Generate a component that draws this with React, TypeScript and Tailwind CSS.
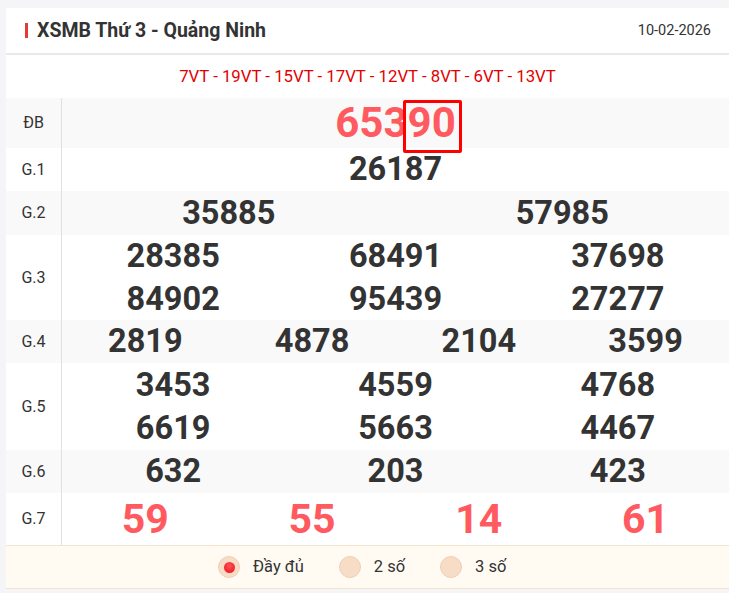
import React from "react";

const font = { fontFamily: "Roboto, 'Noto Sans', sans-serif" };

type Row = {
  label: string;
  cols: number;
  nums: string[];
  kind?: "db" | "g7";
  lineH: number;
  bg: boolean;
};

const rows: Row[] = [
  { label: "ĐB", cols: 1, nums: ["65390"], kind: "db", lineH: 50, bg: true },
  { label: "G.1", cols: 1, nums: ["26187"], lineH: 43, bg: false },
  { label: "G.2", cols: 2, nums: ["35885", "57985"], lineH: 44, bg: true },
  { label: "G.3", cols: 3, nums: ["28385", "68491", "37698", "84902", "95439", "27277"], lineH: 42.5, bg: false },
  { label: "G.4", cols: 4, nums: ["2819", "4878", "2104", "3599"], lineH: 43, bg: true },
  { label: "G.5", cols: 3, nums: ["3453", "4559", "4768", "6619", "5663", "4467"], lineH: 43.5, bg: false },
  { label: "G.6", cols: 3, nums: ["632", "203", "423"], lineH: 43, bg: true },
  { label: "G.7", cols: 4, nums: ["59", "55", "14", "61"], kind: "g7", lineH: 52, bg: false },
];

const gridCls: Record<number, string> = {
  1: "grid grid-cols-1",
  2: "grid grid-cols-2",
  3: "grid grid-cols-3",
  4: "grid grid-cols-4",
};

function Num({ n, kind, h }: { n: string; kind?: string; h: number }) {
  if (kind === "db") {
    return (
      <div className="flex items-center justify-center" style={{ height: h }}>
        <span className="relative text-[42px] font-bold text-[#ff5a5f] leading-none">
          653
          <span className="relative">
            90
            <span className="absolute left-[-5px] right-[-6px] top-[2px] bottom-[-6px] border-[3px] border-[#ff0000] rounded-[2px]" />
          </span>
        </span>
      </div>
    );
  }
  if (kind === "g7") {
    return (
      <div className="flex items-center justify-center text-[41px] font-bold text-[#ff5a5f] leading-none" style={{ height: h }}>
        {n}
      </div>
    );
  }
  return (
    <div className="flex items-center justify-center text-[32.5px] font-bold text-[#333] leading-none" style={{ height: h }}>
      {n}
    </div>
  );
}

function Radio({ checked, label }: { checked?: boolean; label: string }) {
  return (
    <div className="flex items-center gap-[13px]">
      <span className="w-[22px] h-[22px] rounded-full bg-[#f7dcc6] border border-[#efd0b8] flex items-center justify-center">
        {checked && (
          <span className="w-[11px] h-[11px] rounded-full bg-[radial-gradient(circle_at_50%_35%,#ff5252,#e8101e)]" />
        )}
      </span>
      <span className="text-[16.5px] text-[#333]">{label}</span>
    </div>
  );
}

export default function App() {
  return (
    <div className="min-h-[593px] bg-[#f5f5f7] pt-[8px] pl-[6px]" style={font}>
      <div className="bg-white">
        <div className="h-[47px] flex items-center justify-between pl-[19px] pr-[18px] border-b-2 border-[#ece8e9]">
          <div className="flex items-center gap-[9px]">
            <span className="w-[3px] h-[15px] bg-[#e53935]" />
            <span className="text-[19.5px] font-bold text-[#333]">XSMB Thứ 3 - Quảng Ninh</span>
          </div>
          <span className="text-[14.5px] text-[#333]">10-02-2026</span>
        </div>
        <div className="h-[43px] flex items-center justify-center text-[16.8px] text-[#e30000]">
          7VT - 19VT - 15VT - 17VT - 12VT - 8VT - 6VT - 13VT
        </div>
        <div>
          {rows.map((r) => (
            <div key={r.label} className={`flex ${r.bg ? "bg-[#f9f9f9]" : "bg-white"}`}>
              <div className="w-[56px] shrink-0 flex items-center justify-center text-[16px] text-[#333] border-r border-[#e0e0e0]">
                {r.label}
              </div>
              <div className={`flex-1 ${gridCls[r.cols]}`}>
                {r.nums.map((n, i) => (
                  <Num key={i} n={n} kind={r.kind} h={r.lineH} />
                ))}
              </div>
            </div>
          ))}
        </div>
        <div className="h-[44px] bg-[#fffbf3] border-y border-[#f3e4cf] flex items-center gap-[35px] pl-[212px]">
          <Radio checked label="Đầy đủ" />
          <Radio label="2 số" />
          <Radio label="3 số" />
        </div>
      </div>
    </div>
  );
}
